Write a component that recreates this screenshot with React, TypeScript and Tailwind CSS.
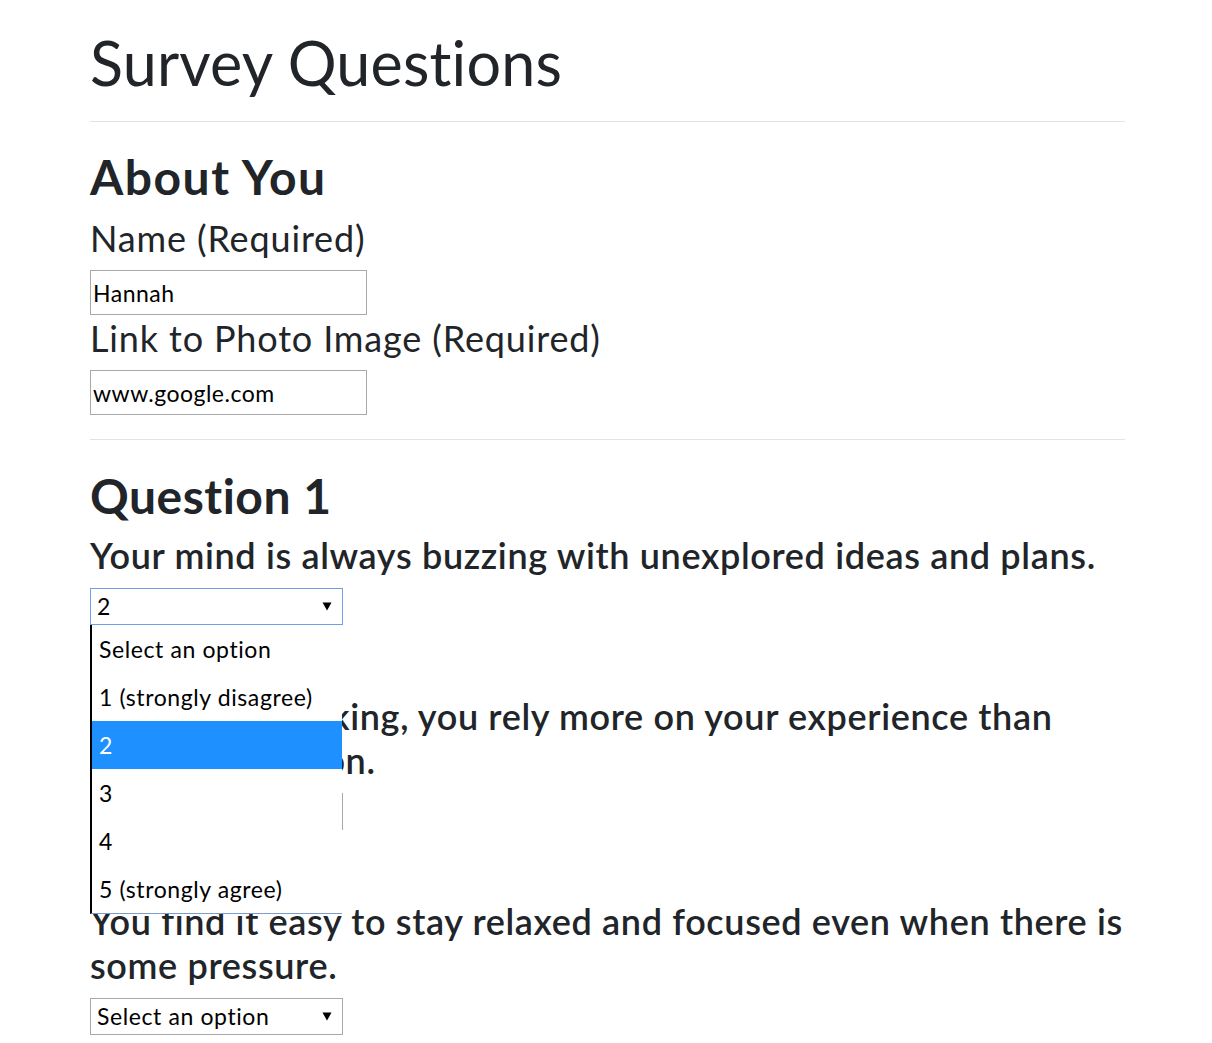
import React from 'react';

const options = ['Select an option', '1 (strongly disagree)', '2', '3', '4', '5 (strongly agree)'];

const Caret = () => (
  <svg width="10" height="9" viewBox="0 0 10 9" className="shrink-0">
    <path d="M0.5 0.5 H9.5 L5 8.5 Z" fill="#000" />
  </svg>
);

const FakeSelect: React.FC<{ value: string; focused?: boolean }> = ({ value, focused }) => (
  <div
    className={`mt-[11px] flex h-[37px] w-[253px] items-center justify-between border pl-[6px] pr-[10px] text-[23px] tracking-[0.6px] text-black ${
      focused ? 'border-[#6f9fe6]' : 'border-[#a9a9a9]'
    }`}
  >
    <span className="leading-none">{value}</span>
    <Caret />
  </div>
);

interface QuestionProps {
  n: number;
  text: string;
  value: string;
  open?: boolean;
}

const Question: React.FC<QuestionProps> = ({ n, text, value, open }) => (
  <section>
    <h2 className="mt-[6px] text-[48px] font-bold leading-[52px] tracking-[0.5px]">Question {n}</h2>
    <p className="mt-[11px] text-[36px] font-semibold leading-[44px] tracking-[0.65px]">{text}</p>
    <div className="relative">
      <FakeSelect value={value} focused={open} />
      {open && (
        <ul className="absolute left-0 top-[37px] z-10 w-[252px] border-b border-l-[2px] border-b-[#7c9bd0] border-l-black bg-white text-[23px] tracking-[0.6px] text-black">
          {options.map((o) => (
            <li
              key={o}
              className={`flex h-[48px] items-center pl-[7px] ${o === value ? 'bg-[#1e90ff] text-white' : ''}`}
            >
              {o}
            </li>
          ))}
        </ul>
      )}
    </div>
  </section>
);

export default function App() {
  return (
    <div className="min-h-screen bg-white font-['Lato',sans-serif] text-[#212529]">
      <div className="ml-[90px] w-[1035px] pb-10">
        <h1 className="pt-[27px] text-[61px] font-normal leading-[72px] tracking-[0.2px]">Survey Questions</h1>
        <hr className="mt-[22px] border-t border-[#e3e3e3]" />

        <h2 className="mt-[29px] text-[48px] font-bold leading-[52px] tracking-[1.5px]">About You</h2>
        <label className="mt-[13px] block text-[36px] leading-[44px] tracking-[0.85px]">Name (Required)</label>
        <input
          readOnly
          value="Hannah"
          className="mt-[10px] block h-[45px] w-[277px] border border-[#a9a9a9] px-[2px] text-[23px] tracking-[0.5px] text-black outline-none"
        />
        <label className="mt-[1px] block text-[36px] leading-[44px] tracking-[0.85px]">
          Link to Photo Image (Required)
        </label>
        <input
          readOnly
          value="www.google.com"
          className="mt-[10px] block h-[45px] w-[277px] border border-[#a9a9a9] px-[2px] text-[23px] tracking-[0.5px] text-black outline-none"
        />
        <hr className="mt-[24px] border-t border-[#e3e3e3]" />

        <div className="pt-[24px]">
          <Question n={1} text="Your mind is always buzzing with unexplored ideas and plans." value="2" open />
          <Question
            n={2}
            text="In decision-making, you rely more on your experience than your imagination."
            value="Select an option"
          />
          <Question
            n={3}
            text="You find it easy to stay relaxed and focused even when there is some pressure."
            value="Select an option"
          />
        </div>
      </div>
    </div>
  );
}
